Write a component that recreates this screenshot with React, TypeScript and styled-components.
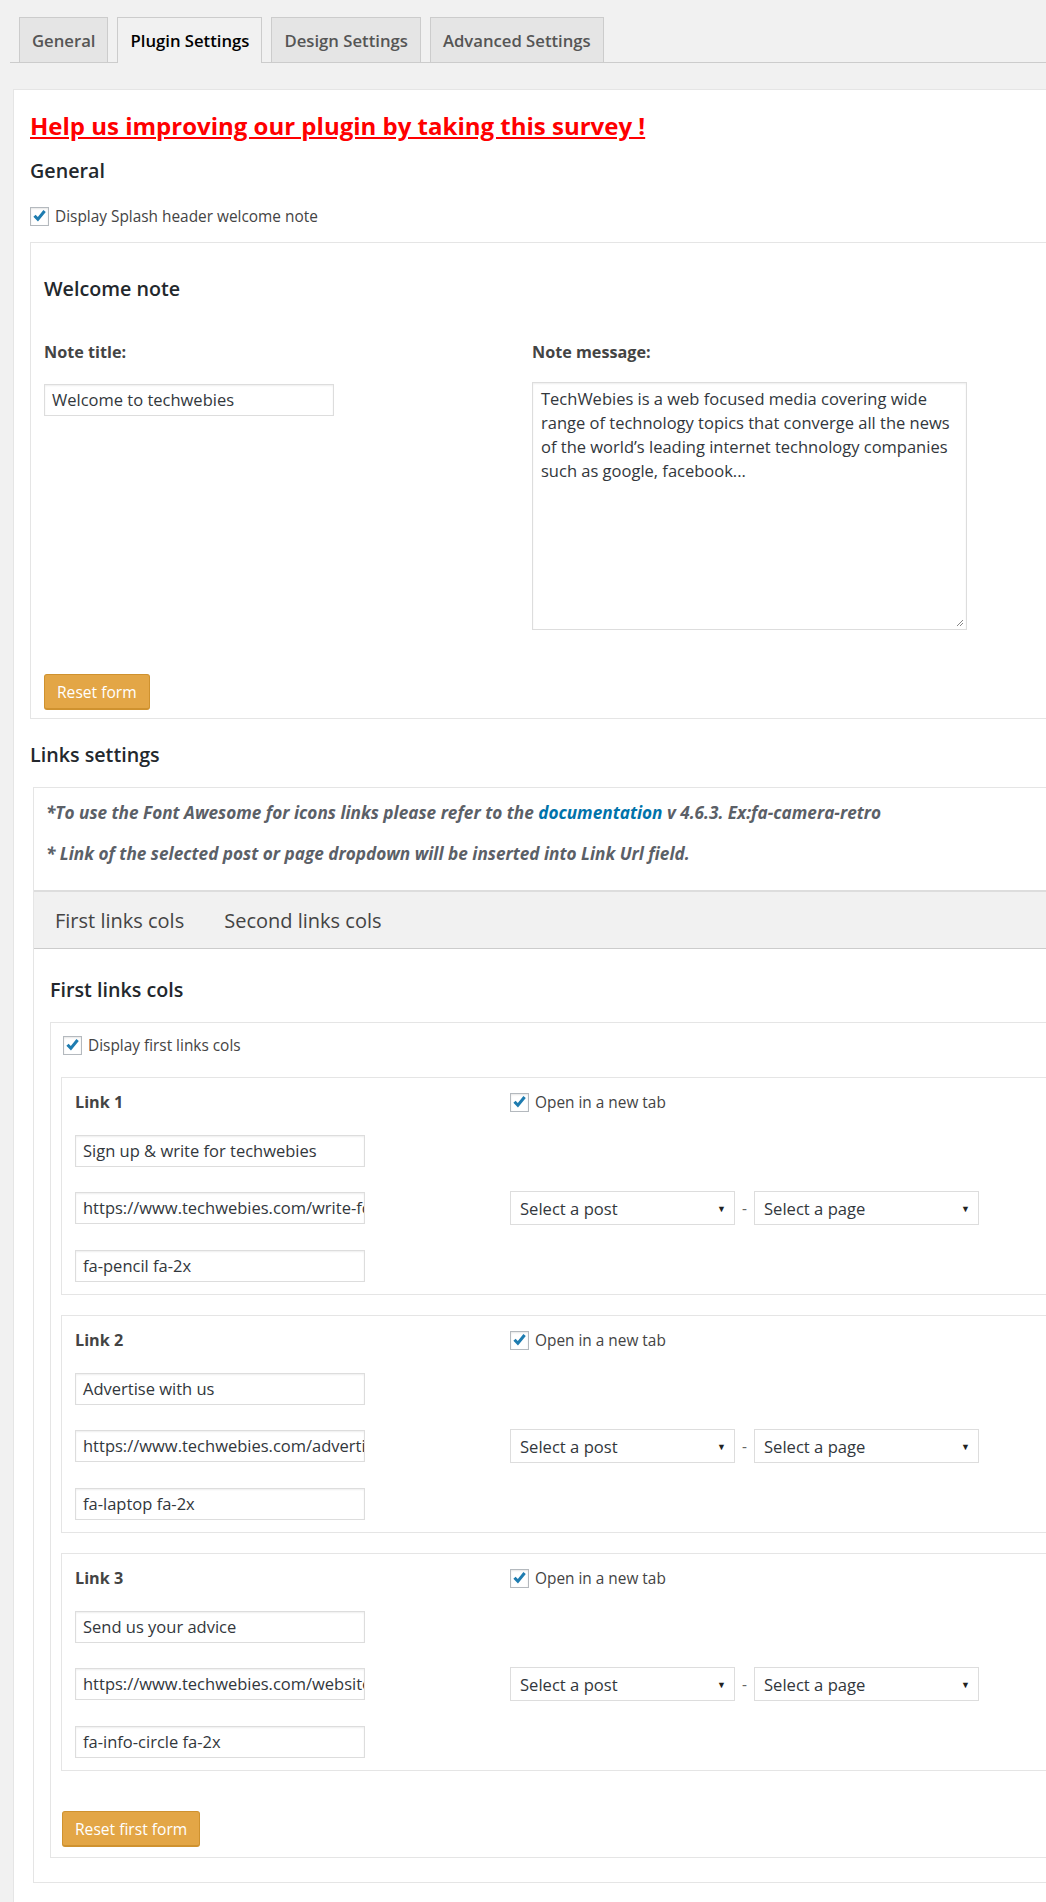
import React from 'react';
import styled, { createGlobalStyle } from 'styled-components';

const GlobalStyle = createGlobalStyle`
  html, body {
    margin: 0;
    padding: 0;
    background: #f1f1f1;
    overflow: hidden;
  }
  body {
    font-family: "Open Sans", "Noto Sans", sans-serif;
    color: #444;
    font-size: 15.4px;
  }
`;

const Page = styled.div`
  width: 1046px;
  height: 1902px;
  padding-top: 17px;
  box-sizing: border-box;
`;

const TabNav = styled.nav`
  display: flex;
  gap: 9px;
  margin-left: 10px;
  padding-left: 9px;
  width: 1100px;
  border-bottom: 1px solid #ccc;
`;

const NavTab = styled.a<{ $active?: boolean }>`
  display: flex;
  align-items: center;
  height: 44px;
  padding: 0 12px;
  border: 1px solid #ccc;
  border-bottom: none;
  background: ${(p) => (p.$active ? '#f1f1f1' : '#e5e5e5')};
  color: ${(p) => (p.$active ? '#000' : '#555')};
  font-size: 16.7px;
  font-weight: 600;
  margin-bottom: ${(p) => (p.$active ? '-1px' : '0')};
  padding-bottom: ${(p) => (p.$active ? '1px' : '0')};
`;

const Panel = styled.div`
  margin: 26px 0 0 13px;
  width: 1100px;
  min-height: 1820px;
  background: #fff;
  border: 1px solid #e5e5e5;
  padding: 0 0 0 16px;
`;

const SurveyLink = styled.a`
  display: block;
  margin-top: 19px;
  font-size: 24px;
  line-height: 34px;
  font-weight: 700;
  color: #f00;
  text-decoration: underline;
`;

const Heading = styled.h3<{ $top: number }>`
  margin: ${(p) => p.$top}px 0 0;
  font-size: 19.7px;
  line-height: 28px;
  font-weight: 600;
  color: #23282d;
`;

const CheckRow = styled.label<{ $top: number }>`
  display: flex;
  align-items: center;
  gap: 6px;
  height: 20px;
  margin-top: ${(p) => p.$top}px;
  font-size: 15.4px;
  color: #444;
`;

const Box = styled.span`
  display: inline-flex;
  align-items: center;
  justify-content: center;
  width: 19px;
  height: 19px;
  box-sizing: border-box;
  border: 1px solid #b4b9be;
  background: #fff;
  box-shadow: inset 0 1px 2px rgba(0, 0, 0, 0.1);
`;

const Check = () => (
  <Box>
    <svg width="17" height="17" viewBox="0 0 20 20">
      <path d="M2.8 10.4 L5.4 7.9 L8 10.6 L14.6 2.4 L17.4 4.8 L8.2 16 Z" fill="#1e7cb0" />
    </svg>
  </Box>
);

const Section = styled.div<{ $top: number; $pad: string; $left?: number }>`
  margin-top: ${(p) => p.$top}px;
  margin-left: ${(p) => p.$left ?? 0}px;
  border: 1px solid #e5e5e5;
  padding: ${(p) => p.$pad};
`;

const SubTitle = styled.h4<{ $top: number }>`
  margin: ${(p) => p.$top}px 0 0;
  font-size: 19.7px;
  line-height: 28px;
  font-weight: 600;
  color: #23282d;
`;

const NoteGrid = styled.div`
  display: grid;
  grid-template-columns: 488px 488px;
  margin-top: 37px;
`;

const FieldCol = styled.div`
  display: flex;
  flex-direction: column;
  align-items: flex-start;
`;

const FieldLabel = styled.div`
  font-size: 16.2px;
  line-height: 24px;
  font-weight: 700;
  color: #444;
`;

const TextInput = styled.div<{ $top?: number }>`
  width: 290px;
  height: 32px;
  box-sizing: border-box;
  margin-top: ${(p) => p.$top ?? 0}px;
  padding: 0 7px;
  border: 1px solid #ddd;
  box-shadow: inset 0 1px 2px rgba(0, 0, 0, 0.07);
  background: #fff;
  font-size: 16.5px;
  line-height: 30px;
  color: #32373c;
  white-space: nowrap;
  overflow: hidden;
`;

const TextArea = styled.div`
  position: relative;
  width: 435px;
  height: 248px;
  box-sizing: border-box;
  margin-top: 18px;
  padding: 4px 8px;
  border: 1px solid #ddd;
  box-shadow: inset 0 1px 2px rgba(0, 0, 0, 0.07);
  font-size: 16.5px;
  line-height: 24px;
  color: #32373c;
`;

const Grip = styled.svg`
  position: absolute;
  right: 2px;
  bottom: 2px;
`;

const Button = styled.button<{ $top: number }>`
  display: block;
  height: 36px;
  margin-top: ${(p) => p.$top}px;
  padding: 0 12px;
  border: 1px solid #cf922f;
  border-bottom-width: 2px;
  border-radius: 3px;
  background: #e3a646;
  color: #fff;
  font-family: inherit;
  font-size: 15.6px;
`;

const Notes = styled.p<{ $top: number }>`
  margin: ${(p) => p.$top}px 0 0 12px;
  font-size: 17.2px;
  line-height: 24px;
  font-style: italic;
  font-weight: 700;
  color: #5b6067;

  a {
    color: #0073aa;
    text-decoration: none;
  }
`;

const SubTabs = styled.div`
  display: flex;
  align-items: center;
  gap: 40px;
  height: 56px;
  margin-top: 24px;
  padding-left: 21px;
  background: #f1f1f1;
  border-top: 2px solid #ddd;
  border-bottom: 1px solid #ccc;
  font-size: 20px;
  color: #444;
`;

const ColsBody = styled.div`
  padding: 0 0 24px 16px;
`;

const LinkBox = styled.div<{ $top: number }>`
  margin: ${(p) => p.$top}px 0 0 -1px;
  border: 1px solid #e5e5e5;
  padding: 14px 0 12px 13px;
`;

const LinkRow = styled.div<{ $top: number }>`
  display: grid;
  grid-template-columns: 435px auto;
  align-items: center;
  margin-top: ${(p) => p.$top}px;
`;

const LinkName = styled.div`
  font-size: 16.2px;
  line-height: 20px;
  font-weight: 700;
  color: #444;
`;

const SelectPair = styled.div`
  display: flex;
  align-items: center;
`;

const Select = styled.div`
  display: flex;
  align-items: center;
  justify-content: space-between;
  width: 225px;
  height: 34px;
  box-sizing: border-box;
  padding: 0 8px 0 9px;
  border: 1px solid #ddd;
  background: #fff;
  font-size: 16.6px;
  color: #32373c;

  span {
    font-size: 9px;
    color: #222;
  }
`;

const Dash = styled.span`
  width: 19px;
  text-align: center;
  color: #666;
`;

const links = [
  {
    name: 'Link 1',
    title: 'Sign up & write for techwebies',
    url: 'https://www.techwebies.com/write-for-us/',
    icon: 'fa-pencil fa-2x',
  },
  {
    name: 'Link 2',
    title: 'Advertise with us',
    url: 'https://www.techwebies.com/advertise/',
    icon: 'fa-laptop fa-2x',
  },
  {
    name: 'Link 3',
    title: 'Send us your advice',
    url: 'https://www.techwebies.com/website-feedback/',
    icon: 'fa-info-circle fa-2x',
  },
];

const App = () => {
  return (
    <Page>
      <GlobalStyle />
      <TabNav>
        <NavTab>General</NavTab>
        <NavTab $active>Plugin Settings</NavTab>
        <NavTab>Design Settings</NavTab>
        <NavTab>Advanced Settings</NavTab>
      </TabNav>

      <Panel>
        <SurveyLink>Help us improving our plugin by taking this survey !</SurveyLink>
        <Heading $top={14}>General</Heading>
        <CheckRow $top={21}>
          <Check />
          Display Splash header welcome note
        </CheckRow>

        <Section $top={16} $pad="0 0 8px 13px">
          <SubTitle $top={32}>Welcome note</SubTitle>
          <NoteGrid>
            <FieldCol>
              <FieldLabel>Note title:</FieldLabel>
              <TextInput $top={20}>Welcome to techwebies</TextInput>
            </FieldCol>
            <FieldCol>
              <FieldLabel>Note message:</FieldLabel>
              <TextArea>
                TechWebies is a web focused media covering wide range of technology topics that
                converge all the news of the world’s leading internet technology companies such as
                google, facebook...
                <Grip width="8" height="8" viewBox="0 0 8 8">
                  <path d="M7 1 L1 7 M7 4 L4 7" stroke="#888" strokeWidth="1" />
                </Grip>
              </TextArea>
            </FieldCol>
          </NoteGrid>
          <Button $top={44}>Reset form</Button>
        </Section>

        <Heading $top={22}>Links settings</Heading>

        <Section $top={18} $pad="0" $left={3}>
          <Notes $top={13}>
            *To use the Font Awesome for icons links please refer to the <a>documentation</a> v
            4.6.3. Ex:fa-camera-retro
          </Notes>
          <Notes $top={17}>* Link of the selected post or page dropdown will be inserted into Link Url field.</Notes>
          <SubTabs>
            <span>First links cols</span>
            <span>Second links cols</span>
          </SubTabs>
          <ColsBody>
            <SubTitle $top={27}>First links cols</SubTitle>
            <Section $top={18} $pad="12px 0 10px 11px">
              <CheckRow $top={0} style={{ marginLeft: 1 }}>
                <Check />
                Display first links cols
              </CheckRow>
              {links.map((l, i) => (
                <LinkBox key={l.name} $top={i === 0 ? 22 : 20}>
                  <LinkRow $top={0}>
                    <LinkName>{l.name}</LinkName>
                    <CheckRow $top={0}>
                      <Check />
                      Open in a new tab
                    </CheckRow>
                  </LinkRow>
                  <TextInput $top={23}>{l.title}</TextInput>
                  <LinkRow $top={24}>
                    <TextInput>{l.url}</TextInput>
                    <SelectPair>
                      <Select>
                        Select a post<span>▼</span>
                      </Select>
                      <Dash>-</Dash>
                      <Select>
                        Select a page<span>▼</span>
                      </Select>
                    </SelectPair>
                  </LinkRow>
                  <TextInput $top={25}>{l.icon}</TextInput>
                </LinkBox>
              ))}
              <Button $top={40}>Reset first form</Button>
            </Section>
          </ColsBody>
        </Section>
      </Panel>
    </Page>
  );
};

export default App;
